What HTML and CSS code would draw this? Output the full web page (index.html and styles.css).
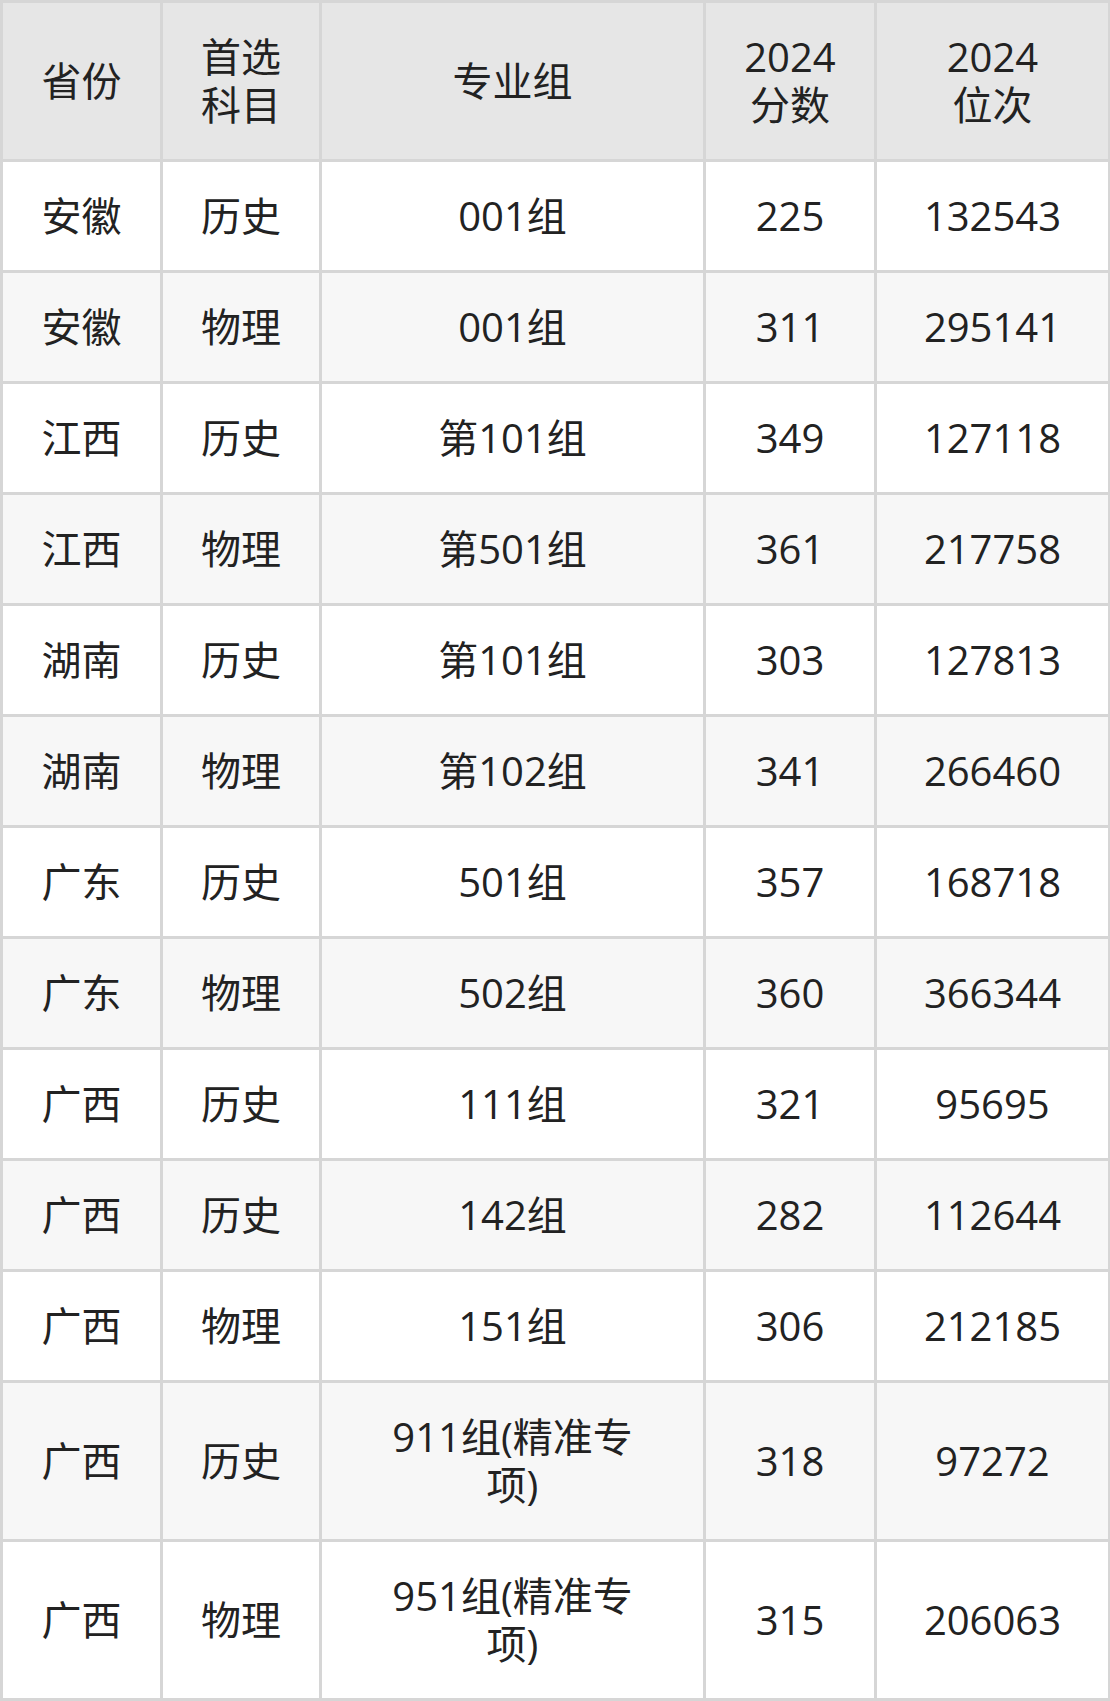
FILE: index.html
```html
<!DOCTYPE html>
<html lang="zh-CN">
<head>
<meta charset="utf-8">
<title>2024 分数位次</title>
<link rel="stylesheet" href="styles.css">
</head>
<body>
<table class="score-table">
  <colgroup>
    <col class="c-prov">
    <col class="c-subj">
    <col class="c-group">
    <col class="c-score">
    <col class="c-rank">
  </colgroup>
  <thead>
    <tr>
      <th>省份</th>
      <th>首选<br>科目</th>
      <th>专业组</th>
      <th>2024<br>分数</th>
      <th>2024<br>位次</th>
    </tr>
  </thead>
  <tbody>
    <tr><td>安徽</td><td>历史</td><td class="group">001组</td><td>225</td><td>132543</td></tr>
    <tr><td>安徽</td><td>物理</td><td class="group">001组</td><td>311</td><td>295141</td></tr>
    <tr><td>江西</td><td>历史</td><td class="group">第101组</td><td>349</td><td>127118</td></tr>
    <tr><td>江西</td><td>物理</td><td class="group">第501组</td><td>361</td><td>217758</td></tr>
    <tr><td>湖南</td><td>历史</td><td class="group">第101组</td><td>303</td><td>127813</td></tr>
    <tr><td>湖南</td><td>物理</td><td class="group">第102组</td><td>341</td><td>266460</td></tr>
    <tr><td>广东</td><td>历史</td><td class="group">501组</td><td>357</td><td>168718</td></tr>
    <tr><td>广东</td><td>物理</td><td class="group">502组</td><td>360</td><td>366344</td></tr>
    <tr><td>广西</td><td>历史</td><td class="group">111组</td><td>321</td><td>95695</td></tr>
    <tr><td>广西</td><td>历史</td><td class="group">142组</td><td>282</td><td>112644</td></tr>
    <tr><td>广西</td><td>物理</td><td class="group">151组</td><td>306</td><td>212185</td></tr>
    <tr><td>广西</td><td>历史</td><td class="group">911组(精准专项)</td><td>318</td><td>97272</td></tr>
    <tr><td>广西</td><td>物理</td><td class="group">951组(精准专项)</td><td>315</td><td>206063</td></tr>
  </tbody>
</table>
</body>
</html>
```

FILE: styles.css
```css
html, body {
  margin: 0;
  padding: 0;
  background: #ffffff;
}

.score-table {
  border-collapse: collapse;
  table-layout: fixed;
  width: 1108px;
  margin: 0;
  font-family: "Open Sans", "Noto Sans CJK SC", sans-serif;
  font-size: 40px;
  line-height: 48px;
  color: #222222;
}

.c-prov { width: 160px; }
.c-subj { width: 159px; }
.c-group { width: 384px; }
.c-score { width: 171px; }
.c-rank { width: 234px; }

.score-table th,
.score-table td {
  border: 3px solid #d6d6d6;
  padding: 30px 12px;
  text-align: center;
  vertical-align: middle;
  font-weight: 400;
}

.score-table thead th {
  background: #e6e6e6;
}

.score-table tbody tr:nth-child(even) td {
  background: #f7f7f7;
}

.score-table td.group {
  padding-left: 50px;
  padding-right: 50px;
}
```
